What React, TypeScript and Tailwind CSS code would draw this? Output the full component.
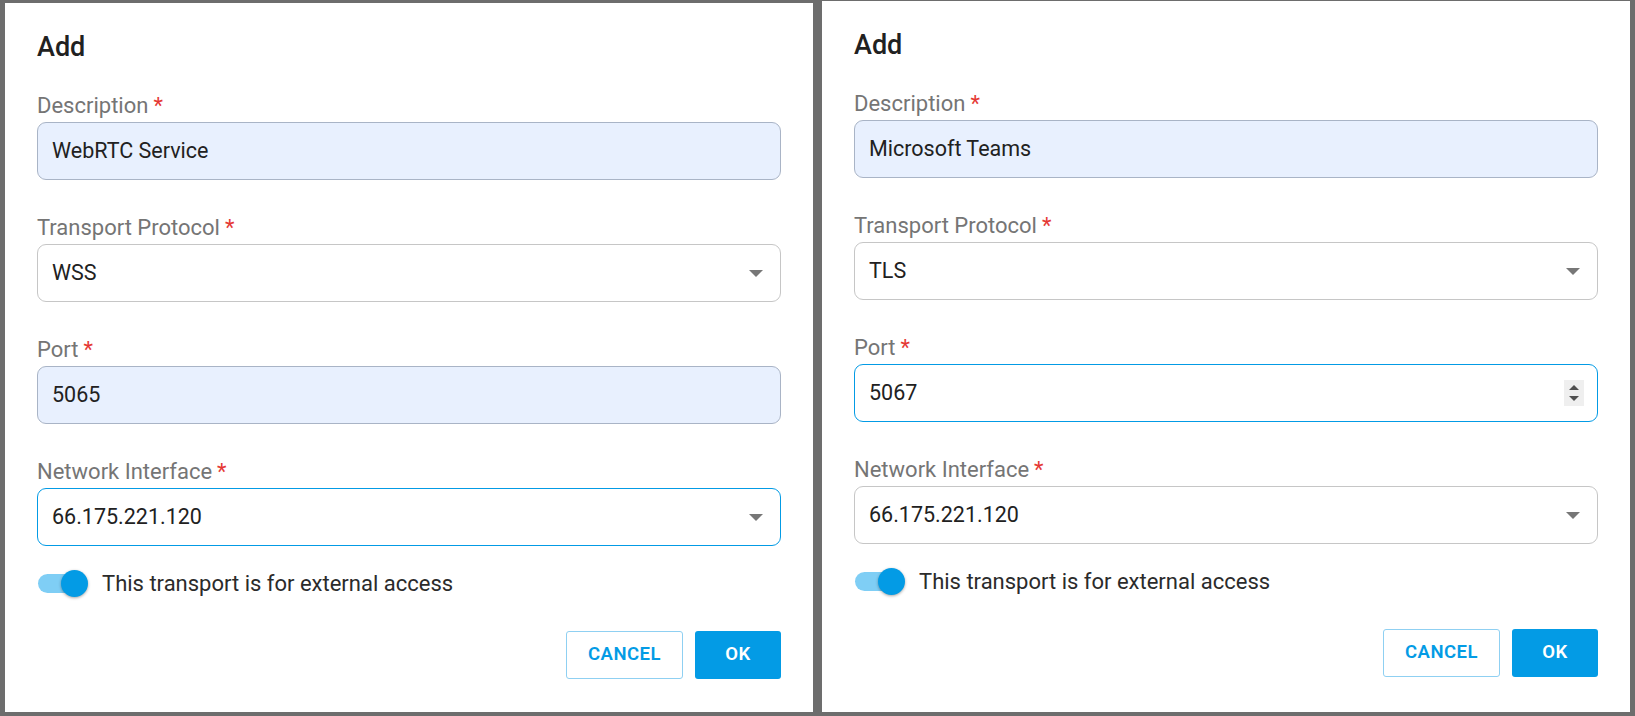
import React, { FC, ReactNode } from 'react';

type Variant = 'autofill' | 'plain' | 'focus';

const boxClass: Record<Variant, string> = {
  autofill: 'bg-[#e8f0fe] border-[#a9b4c6]',
  plain: 'bg-white border-[#c6c6c6]',
  focus: 'bg-white border-[#039be5]',
};

const Label: FC<{ text: string }> = ({ text }) => (
  <div className="h-6 leading-6 text-[22px] text-[#757575] whitespace-nowrap">
    {text}
    <span className="ml-[5px] text-[#e53935]">*</span>
  </div>
);

const Arrow = () => (
  <svg width="14" height="7" viewBox="0 0 14 7" className="ml-auto mr-[4px]">
    <path d="M0 0h14L7 7z" fill="#777" />
  </svg>
);

const Spinner = () => (
  <div className="ml-auto flex h-[26px] w-5 flex-col items-center justify-center gap-[6px] bg-[#efefef]">
    <svg width="10" height="5" viewBox="0 0 10 5">
      <path d="M0 5L5 0l5 5z" fill="#505050" />
    </svg>
    <svg width="10" height="5" viewBox="0 0 10 5">
      <path d="M0 0h10L5 5z" fill="#505050" />
    </svg>
  </div>
);

type FieldProps = {
  label: string;
  value: string;
  variant: Variant;
  trailing?: ReactNode;
};

const Field: FC<FieldProps> = ({ label, value, variant, trailing }) => (
  <div className="flex flex-col">
    <Label text={label} />
    <div
      className={`mt-1 flex h-[58px] items-center rounded-[9px] border pl-[14px] pr-[13px] ${boxClass[variant]}`}
    >
      <span className="text-[21.5px] text-[#212121]">{value}</span>
      {trailing}
    </div>
  </div>
);

type DialogProps = {
  description: string;
  protocol: string;
  port: string;
  portVariant: Variant;
  portTrailing?: ReactNode;
  nicVariant: Variant;
};

const Dialog: FC<DialogProps> = ({ description, protocol, port, portVariant, portTrailing, nicVariant }) => (
  <div className="flex w-[808px] flex-col bg-white px-8 pt-7">
    <h2 className="text-[27px] font-medium leading-8 text-[#212121]">Add</h2>

    <div className="mt-[31px] flex flex-col gap-9">
      <Field label="Description" value={description} variant="autofill" />
      <Field label="Transport Protocol" value={protocol} variant="plain" trailing={<Arrow />} />
      <Field label="Port" value={port} variant={portVariant} trailing={portTrailing} />
      <Field label="Network Interface" value="66.175.221.120" variant={nicVariant} trailing={<Arrow />} />
    </div>

    <div className="mt-[24px] flex h-[27px] items-center">
      <div className="relative ml-px h-[27px] w-[51px]">
        <div className="absolute left-0 top-[4px] h-[19px] w-[42px] rounded-full bg-[#7fcef5]" />
        <div className="absolute left-[23px] top-0 h-[27px] w-[27px] rounded-full bg-[#039be5] shadow-[0_1px_3px_rgba(0,0,0,0.35)]" />
      </div>
      <span className="ml-[13px] text-[22px] leading-[27px] text-[#2b2b2b]">This transport is for external access</span>
    </div>

    <div className="mt-[34px] flex justify-end gap-3">
      <button
        type="button"
        className="h-12 w-[117px] rounded-[3px] border border-[#8fd0f2] bg-white text-[18.5px] font-semibold tracking-[0.5px] text-[#039be5]"
      >
        CANCEL
      </button>
      <button
        type="button"
        className="h-12 w-[86px] rounded-[3px] bg-[#039be5] text-[18.5px] font-semibold tracking-[0.5px] text-white"
      >
        OK
      </button>
    </div>
  </div>
);

const App: FC = () => (
  <div className="flex h-[716px] w-full gap-[9px] overflow-hidden bg-[#6d6d6d] pl-[5px] font-['Roboto',sans-serif]">
    <div className="mt-[3px] flex h-[709px] shrink-0">
      <Dialog
        description="WebRTC Service"
        protocol="WSS"
        port="5065"
        portVariant="autofill"
        nicVariant="focus"
      />
    </div>
    <div className="mt-px flex h-[711px] shrink-0">
      <Dialog
        description="Microsoft Teams"
        protocol="TLS"
        port="5067"
        portVariant="focus"
        portTrailing={<Spinner />}
        nicVariant="plain"
      />
    </div>
  </div>
);

export default App;
